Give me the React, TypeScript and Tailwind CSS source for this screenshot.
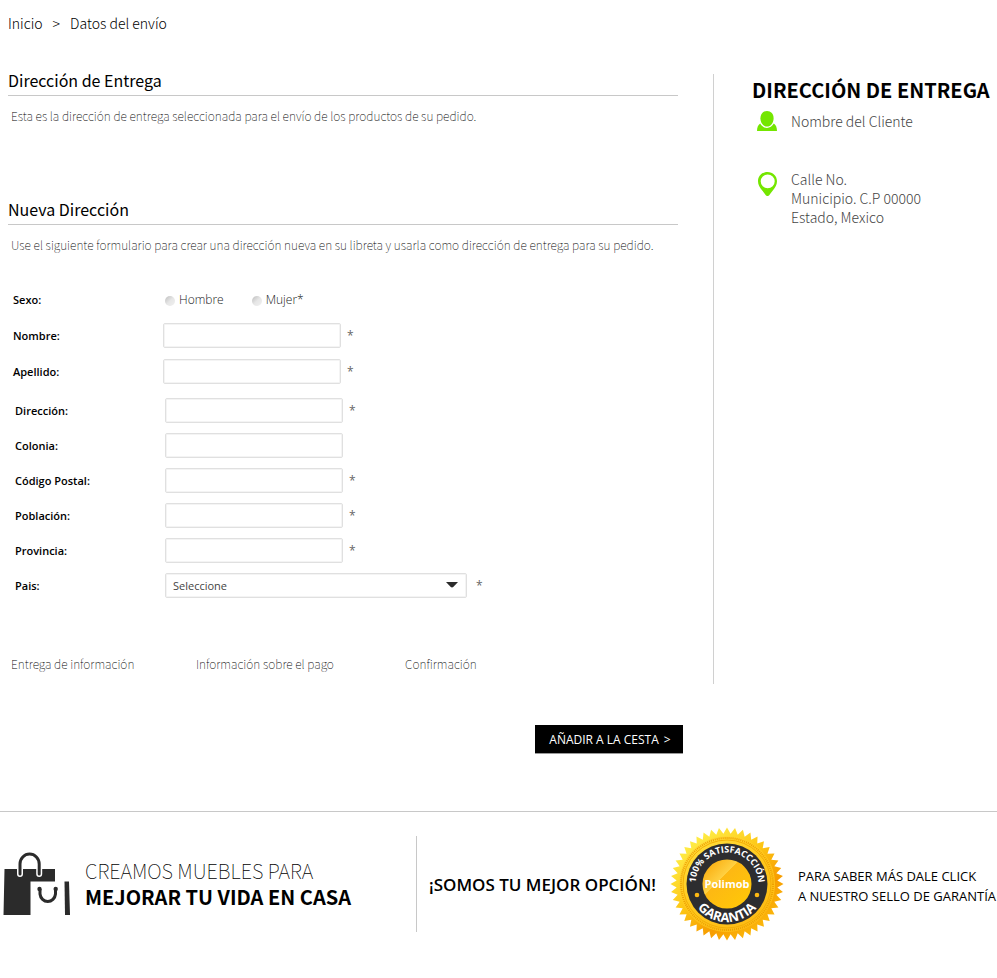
import type { ReactNode } from "react";

const SOURCE = "font-['Noto_Sans_CJK_SC',sans-serif]";
const OPEN = "font-['Open_Sans',sans-serif]";
const BOX = "border border-[#e0e0e0] bg-white rounded-xs shadow-[inset_0_0_0_1px_#f4f4f4]";

function Star() {
  return <span className={`${OPEN} text-[12px] leading-4 text-[#666]`}>*</span>;
}

type RowProps = { id: string; label: string; required?: boolean; children?: ReactNode };

function Field({ id, label, required = true, children }: RowProps) {
  return (
    <div className="flex items-center">
      <label htmlFor={id} className={`${OPEN} w-[150px] pt-px text-[11px] leading-4 font-semibold text-black`}>
        {label}
      </label>
      <div className="flex items-center gap-[6px]">
        {children ?? (
          <input id={id} type="text" className={`${BOX} h-[25px] w-[178px] px-2 text-[11px] outline-none`} />
        )}
        {required && <Star />}
      </div>
    </div>
  );
}

function Radio({ id, label }: { id: string; label: string }) {
  return (
    <span className="flex items-center gap-1">
      <input
        id={id}
        type="radio"
        name="sexo"
        className="mt-[2px] size-[10px] appearance-none rounded-full bg-linear-to-br from-[#bdbdbd] via-[#e6e6e6] to-[#f0f0f0] checked:from-[#555]"
      />
      <label htmlFor={id} className={`${OPEN} text-[12px] leading-4 font-light text-[#222]`}>
        {label}
      </label>
    </span>
  );
}

function Section({ title, text }: { title: string; text: string }) {
  return (
    <section>
      <h2 className="border-b border-[#c8c8c8] pb-[3px] text-[16px] leading-6 font-normal text-black">{title}</h2>
      <p className="pt-3 pl-[3px] text-[12px] leading-4 font-thin text-black">{text}</p>
    </section>
  );
}

function PersonIcon() {
  return (
    <svg viewBox="0 0 20 20" className="size-5 shrink-0" fill="#74e600" aria-hidden="true">
      <path d="M10 0c4 0 6.600 3 6.600 7.300 0 4.600-3 8.300-6.600 8.300s-6.600-3.700-6.600-8.300C3.400 3 6 0 10 0Z" />
      <path d="M3.200 12.600c1.600 2.800 4 4.300 6.800 4.300s5.200-1.500 6.800-4.300c2 1.200 3.200 3.800 3.200 7.400H0c0-3.600 1.200-6.200 3.200-7.400Z" />
    </svg>
  );
}

function PinIcon() {
  return (
    <svg viewBox="0 0 20 24" className="mt-[2px] h-6 w-5 shrink-0" fill="#74e600" aria-hidden="true">
      <path
        fillRule="evenodd"
        d="M10.500 0c5.400 0 9.500 4 9.500 9.300 0 3.500-1.700 6.300-4.200 9.200-1.400 1.600-2.600 3.300-3.600 4.700-.8 1.100-2.600 1.100-3.400 0-1-1.400-2.200-3.100-3.600-4.700C2.700 15.600 1 12.800 1 9.300 1 4 5.100 0 10.500 0Zm.2 2.400a7 6.900 0 1 0 0 13.800 7 6.900 0 0 0 0-13.800Z"
      />
    </svg>
  );
}

function BagsIcon() {
  return (
    <svg viewBox="0 0 68 64" className="h-16 w-[68px] shrink-0" aria-hidden="true">
      <path d="M1.500 17H52V29.500H27.500V63H0.500Z" fill="#2b2b2b" />
      <path d="M17 22V13a9.600 10 0 0 1 19.200 0V22" fill="none" stroke="#fff" strokeWidth="6" strokeLinecap="round" />
      <path d="M17 22V12a9.600 10 0 0 1 19.200 0V22" fill="none" stroke="#2b2b2b" strokeWidth="3" strokeLinecap="round" />
      <path d="M37 37v5a7.800 8.500 0 0 0 15.500 0v-5" fill="none" stroke="#2b2b2b" strokeWidth="3" />
      <circle cx="36.500" cy="37" r="2.200" fill="#2b2b2b" />
      <circle cx="52.700" cy="37" r="2.200" fill="#2b2b2b" />
      <path d="M61.500 29.500h4.500l1 33.500h-5Z" fill="#2b2b2b" />
    </svg>
  );
}

const TEETH = 44;
const sealPoints = Array.from({ length: TEETH * 2 }, (_, i) => {
  const angle = (i * Math.PI) / TEETH - Math.PI / 2;
  const radius = i % 2 === 0 ? 56.5 : 50.5;
  return `${(57 + radius * Math.cos(angle)).toFixed(2)},${(57 + radius * Math.sin(angle)).toFixed(2)}`;
}).join(" ");

function Seal() {
  return (
    <svg viewBox="0 0 114 114" className="size-[114px] shrink-0" role="img" aria-label="Sello de garantía">
      <defs>
        <linearGradient id="gold" x1="0.150" y1="0.100" x2="0.800" y2="0.900">
          <stop offset="0" stopColor="#fff04a" />
          <stop offset="0.450" stopColor="#fdc514" />
          <stop offset="0.750" stopColor="#f79d00" />
          <stop offset="1" stopColor="#fbb80c" />
        </linearGradient>
        <linearGradient id="disc" x1="0.100" y1="0" x2="0.800" y2="1">
          <stop offset="0" stopColor="#ffe040" />
          <stop offset="0.500" stopColor="#ffc91e" />
          <stop offset="1" stopColor="#fdb913" />
        </linearGradient>
        <linearGradient id="core" x1="0.100" y1="0.100" x2="0.900" y2="0.900">
          <stop offset="0" stopColor="#f9ae10" />
          <stop offset="0.350" stopColor="#ffd042" />
          <stop offset="0.360" stopColor="#fdb813" />
          <stop offset="1" stopColor="#ffc708" />
        </linearGradient>
        <path id="top-arc" d="M25.500 57a31.500 31.500 0 0 1 63 0" />
        <path id="bottom-arc" d="M19 57a38 38 0 0 0 76 0" />
      </defs>
      <polygon points={sealPoints} fill="url(#gold)" />
      <circle cx="57" cy="57" r="48" fill="url(#disc)" />
      <circle cx="57" cy="57" r="46" fill="none" stroke="#eda000" strokeWidth="2" strokeDasharray="1 1" />
      <circle cx="57" cy="57" r="44" fill="none" stroke="#f3ad05" strokeWidth="1" />
      <circle cx="57" cy="57" r="40.500" fill="#2d2d2f" />
      <circle cx="57" cy="57" r="24.500" fill="url(#core)" />
      <circle cx="27" cy="68" r="2.300" fill="#fdb813" />
      <circle cx="87" cy="68" r="2.300" fill="#fdb813" />
      <text className={`${OPEN} text-[9px] font-bold`} fill="#fff" textAnchor="middle">
        <textPath href="#top-arc" startOffset="50%">100% SATISFACCCIÓN</textPath>
      </text>
      <text className={`${OPEN} text-[13px] font-bold`} fill="#fff" textAnchor="middle">
        <textPath href="#bottom-arc" startOffset="50%">GARANTIA</textPath>
      </text>
      <text x="57" y="61" className={`${OPEN} text-[11px] font-bold`} fill="#fff" textAnchor="middle">
        Polimob
      </text>
    </svg>
  );
}

export default function App() {
  return (
    <div className={`${SOURCE} bg-white text-black`}>
      <nav className="flex gap-[10px] pt-[11px] pl-2 text-[14px] leading-6 font-light" aria-label="Ruta">
        <a href="#inicio">Inicio</a>
        <span>&gt;</span>
        <a href="#envio">Datos del envío</a>
      </nav>

      <div className="flex pt-[33px]">
        <main className="min-w-0 flex-1 pr-[35px] pb-3 pl-2">
          <Section
            title="Dirección de Entrega"
            text="Esta es la dirección de entrega seleccionada para el envío de los productos de su pedido."
          />
          <div className="pt-[73px]">
            <Section
              title="Nueva Dirección"
              text="Use el siguiente formulario para crear una dirección nueva en su libreta y usarla como dirección de entrega para su pedido."
            />
          </div>

          <form className="pt-[34px]">
            <div className="flex flex-col gap-[11px] pl-[5px]">
              <div className="flex h-[25px] items-center" role="radiogroup" aria-labelledby="sexo">
                <span id="sexo" className={`${OPEN} w-[152px] text-[11px] leading-4 font-semibold`}>
                  Sexo:
                </span>
                <div className="flex gap-7">
                  <Radio id="hombre" label="Hombre" />
                  <Radio id="mujer" label="Mujer*" />
                </div>
              </div>
              <Field id="nombre" label="Nombre:" />
              <Field id="apellido" label="Apellido:" />
            </div>
            <div className="flex flex-col gap-[10px] pt-[14px] pl-[7px]">
              <Field id="direccion" label="Dirección:" />
              <Field id="colonia" label="Colonia:" required={false} />
              <Field id="postal" label="Código Postal:" />
              <Field id="poblacion" label="Población:" />
              <Field id="provincia" label="Provincia:" />
              <Field id="pais" label="Pais:">
                <div className="relative mr-[3px]">
                  <select
                    id="pais"
                    className={`${OPEN} ${BOX} block h-[25px] w-[302px] appearance-none px-[7px] text-[11px] leading-4 text-[#444] outline-none`}
                  >
                    <option>Seleccione</option>
                  </select>
                  <svg
                    viewBox="0 0 12 6"
                    className="pointer-events-none absolute top-[9px] right-[9px] h-[6px] w-3"
                    aria-hidden="true"
                  >
                    <path d="M0 0h12L7.500 4.800Q6 6.400 4.500 4.800Z" fill="#2b2b2b" />
                  </svg>
                </div>
              </Field>
            </div>
          </form>

          <ol className="grid grid-cols-[185px_209px_auto] pt-[58px] pl-[3px] text-[12px] leading-4 font-thin">
            <li>Entrega de información</li>
            <li>Información sobre el pago</li>
            <li>Confirmación</li>
          </ol>
        </main>

        <aside className="mt-[6px] w-[284px] shrink-0 border-l border-[#d0d0d0] pt-1 pl-[38px]">
          <h2 className="text-[20px] leading-6 font-bold whitespace-nowrap">DIRECCIÓN DE ENTREGA</h2>
          <div className="flex gap-[14px] pt-[9px] pl-[5px] text-[14px] leading-5 font-light text-[#444]">
            <PersonIcon />
            <p>Nombre del Cliente</p>
          </div>
          <div className="flex gap-[14px] pt-[39px] pl-[5px] text-[14px] leading-[19px] font-light text-[#444]">
            <PinIcon />
            <address className="not-italic">
              Calle No.
              <br />
              Municipio. C.P 00000
              <br />
              Estado, Mexico
            </address>
          </div>
        </aside>
      </div>

      <div className="flex justify-end pt-[41px] pr-[314px]">
        <button
          type="button"
          className={`${OPEN} flex h-[29px] w-[148px] items-center justify-center gap-[5px] border-b border-[#999] bg-black pt-px pl-[2px] text-[12px] leading-4 text-white`}
        >
          <span>AÑADIR A LA CESTA</span>
          <span>&gt;</span>
        </button>
      </div>

      <footer className="mt-[57px] flex items-center border-t border-[#c8c8c8] pt-[15px]">
        <div className="flex h-24 w-[417px] shrink-0 items-center gap-[14px] border-r border-[#c8c8c8] pl-[3px]">
          <BagsIcon />
          <p className="text-[20px] leading-[26px]">
            <span className="block font-thin">CREAMOS MUEBLES PARA</span>
            <strong className="block font-bold">MEJORAR TU VIDA EN CASA</strong>
          </p>
        </div>
        <div className={`${OPEN} flex min-w-0 flex-1 items-center gap-[14px] pl-3 whitespace-nowrap`}>
          <p className="pt-[2px] text-[17px] leading-6 font-semibold">¡SOMOS TU MEJOR OPCIÓN!</p>
          <Seal />
          <p className="pt-1 text-[13px] leading-5">
            PARA SABER MÁS DALE CLICK
            <br />A NUESTRO SELLO DE GARANTÍA
          </p>
        </div>
      </footer>
    </div>
  );
}
